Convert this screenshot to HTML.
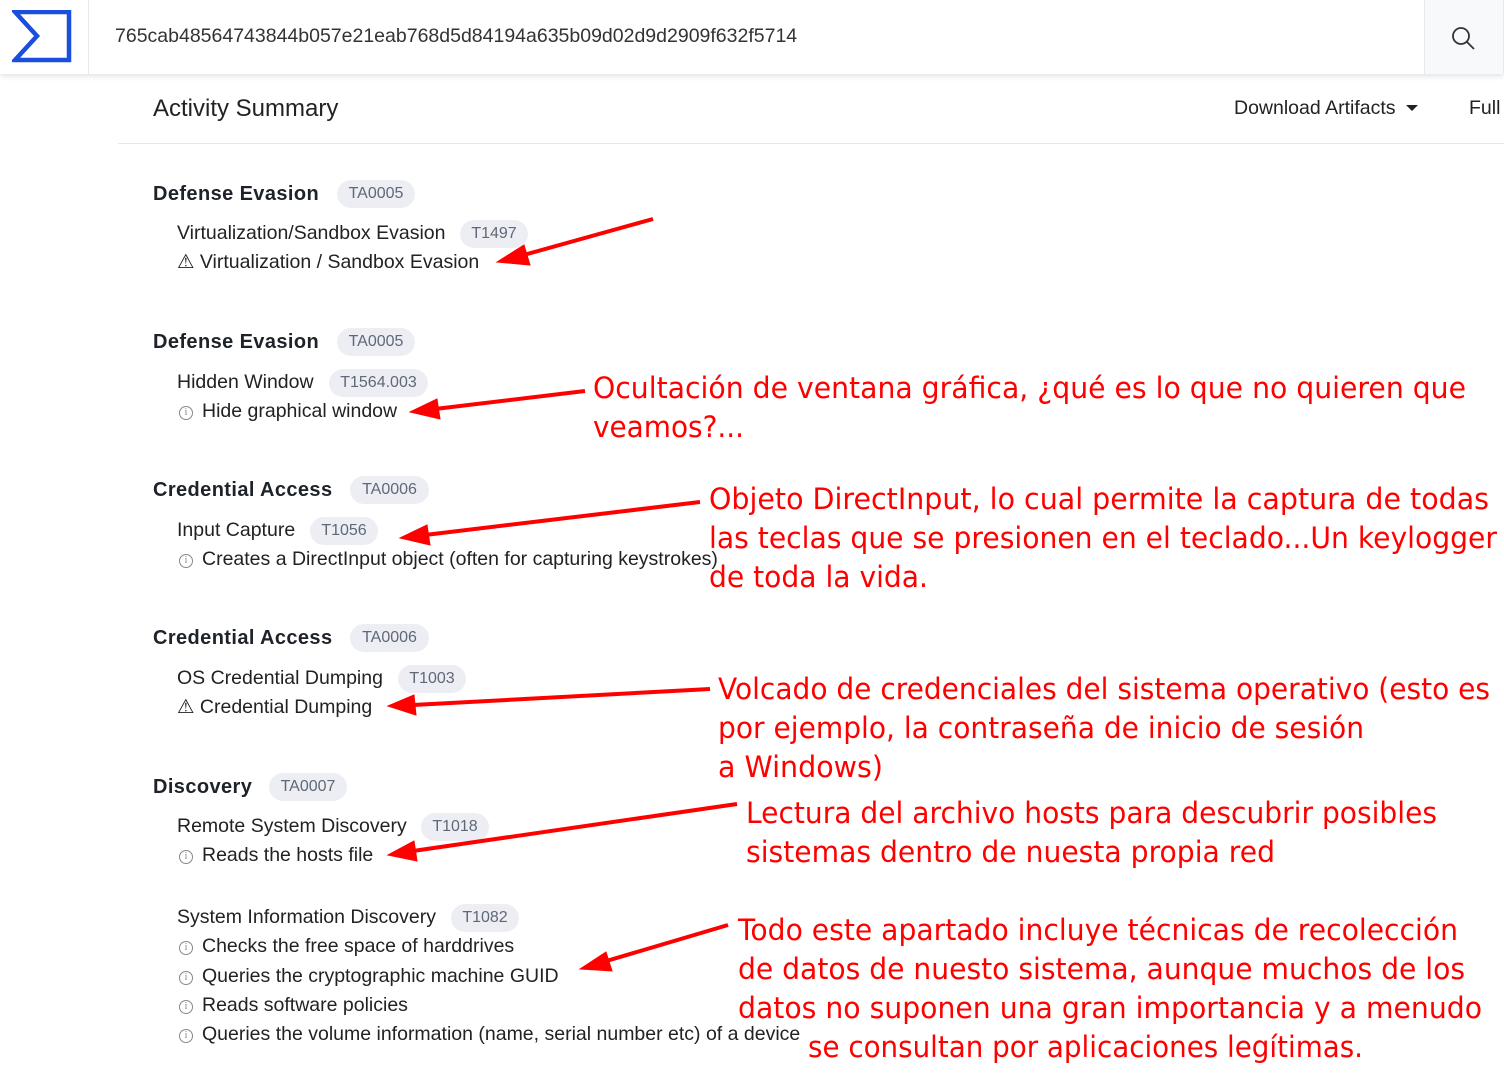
<!DOCTYPE html>
<html><head><meta charset="utf-8"><style>
body{margin:0;width:1504px;height:1079px;background:#fff;position:relative;overflow:hidden;font-family:"Liberation Sans",Arial,sans-serif;color:#222;}
.a{position:absolute;white-space:nowrap;line-height:1;}
.h{font-weight:bold;font-size:20px;letter-spacing:0.4px;color:#1e2229;}
.t{font-size:19.5px;color:#222;}
.s{font-size:19.5px;color:#222;}
.b{position:absolute;height:28px;border-radius:14px;background:#eceef3;color:#606877;font-size:16px;line-height:28px;text-align:center;}
.i{display:inline-block;width:12px;height:12px;border:1px solid #888;border-radius:50%;font-size:10px;line-height:12px;text-align:center;color:#888;margin-right:9px;vertical-align:2px;font-family:"Liberation Serif",serif;}
</style></head><body>
<div style="position:absolute;left:0;top:0;width:1504px;height:74px;background:#fff;box-shadow:0 2px 6px rgba(0,0,0,.12);"></div>
<svg class="a" style="left:12px;top:10px" width="60" height="53"><path d="M3 2 H57 V50 H3 L25 26 Z" fill="none" stroke="#1a4fdd" stroke-width="4.5"/></svg>
<div style="position:absolute;left:88px;top:0;width:1px;height:74px;background:#e6e8ee"></div>
<div class="a" style="left:115px;top:27px;font-size:19.5px;color:#333">765cab48564743844b057e21eab768d5d84194a635b09d02d9d2909f632f5714</div>
<div style="position:absolute;left:1424px;top:0;width:78px;height:74px;background:#f8f9fa;border-left:1px solid #e6e8ee;border-right:1px solid #e6e8ee"></div>
<svg class="a" style="left:1450px;top:25px" width="26" height="26"><circle cx="11" cy="11" r="8" fill="none" stroke="#333" stroke-width="1.8"/><path d="M17 17 L24 24" stroke="#333" stroke-width="1.8"/></svg>
<div class="a" style="left:153px;top:97px;font-size:24px;color:#222">Activity Summary</div>
<div class="a" style="left:1234px;top:99px;font-size:19.5px;color:#222">Download Artifacts</div>
<svg class="a" style="left:1406px;top:105px" width="12" height="8"><path d="M0 0H12L6 6Z" fill="#222"/></svg>
<div class="a" style="left:1469px;top:99px;font-size:19.5px;color:#222">Full</div>
<div style="position:absolute;left:118px;top:143px;width:1386px;height:1px;background:#e5e7eb"></div>

<div class="a h" style="left:153px;top:184px">Defense Evasion</div><div class="b" style="left:337px;top:180px;width:78px">TA0005</div>
<div class="a t" style="left:177px;top:224px">Virtualization/Sandbox Evasion</div><div class="b" style="left:460px;top:220px;width:68px">T1497</div>
<div class="a s" style="left:177px;top:253px">⚠ Virtualization / Sandbox Evasion</div>

<div class="a h" style="left:153px;top:332px">Defense Evasion</div><div class="b" style="left:337px;top:328px;width:78px">TA0005</div>
<div class="a t" style="left:177px;top:373px">Hidden Window</div><div class="b" style="left:329px;top:369px;width:99px">T1564.003</div>
<div class="a s" style="left:179px;top:402px"><span class="i">i</span>Hide graphical window</div>

<div class="a h" style="left:153px;top:480px">Credential Access</div><div class="b" style="left:350px;top:476px;width:79px">TA0006</div>
<div class="a t" style="left:177px;top:521px">Input Capture</div><div class="b" style="left:310px;top:517px;width:68px">T1056</div>
<div class="a s" style="left:179px;top:550px"><span class="i">i</span>Creates a DirectInput object (often for capturing keystrokes)</div>

<div class="a h" style="left:153px;top:628px">Credential Access</div><div class="b" style="left:350px;top:624px;width:79px">TA0006</div>
<div class="a t" style="left:177px;top:669px">OS Credential Dumping</div><div class="b" style="left:398px;top:665px;width:68px">T1003</div>
<div class="a s" style="left:177px;top:698px">⚠ Credential Dumping</div>

<div class="a h" style="left:153px;top:777px">Discovery</div><div class="b" style="left:269px;top:773px;width:78px">TA0007</div>
<div class="a t" style="left:177px;top:817px">Remote System Discovery</div><div class="b" style="left:421px;top:813px;width:68px">T1018</div>
<div class="a s" style="left:179px;top:846px"><span class="i">i</span>Reads the hosts file</div>

<div class="a t" style="left:177px;top:908px">System Information Discovery</div><div class="b" style="left:451px;top:904px;width:68px">T1082</div>
<div class="a s" style="left:179px;top:937px"><span class="i">i</span>Checks the free space of harddrives</div>
<div class="a s" style="left:179px;top:967px"><span class="i">i</span>Queries the cryptographic machine GUID</div>
<div class="a s" style="left:179px;top:996px"><span class="i">i</span>Reads software policies</div>
<div class="a s" style="left:179px;top:1025px"><span class="i">i</span>Queries the volume information (name, serial number etc) of a device</div>

<svg class="a" style="left:0;top:0" width="1504" height="1079" font-family="DejaVu Sans, Verdana, sans-serif" font-size="29" fill="#ff0000">
<g stroke="#f00" stroke-width="4" fill="#f00">
<line x1="653" y1="219" x2="520" y2="256"/><path d="M497 262 L524 245 L530 265 Z" stroke-width="1"/>
<line x1="585" y1="391" x2="435" y2="409"/><path d="M410 412 L437 399 L440 419 Z" stroke-width="1"/>
<line x1="700" y1="502" x2="425" y2="535"/><path d="M400 538 L427 525 L430 545 Z" stroke-width="1"/>
<line x1="710" y1="689" x2="413" y2="705"/><path d="M388 706 L414 695 L416 715 Z" stroke-width="1"/>
<line x1="737" y1="804" x2="413" y2="851"/><path d="M388 855 L414 841 L417 861 Z" stroke-width="1"/>
<line x1="728" y1="925" x2="603" y2="962"/><path d="M580 969 L606 952 L612 971 Z" stroke-width="1"/>
</g>
<text x="593" y="398" textLength="873" lengthAdjust="spacingAndGlyphs">Ocultación de ventana gráfica, ¿qué es lo que no quieren que</text>
<text x="593" y="437" textLength="151" lengthAdjust="spacingAndGlyphs">veamos?...</text>
<text x="709" y="509" textLength="780" lengthAdjust="spacingAndGlyphs">Objeto DirectInput, lo cual permite la captura de todas</text>
<text x="709" y="548" textLength="788" lengthAdjust="spacingAndGlyphs">las teclas que se presionen en el teclado...Un keylogger</text>
<text x="709" y="587" textLength="219" lengthAdjust="spacingAndGlyphs">de toda la vida.</text>
<text x="718" y="699" textLength="772" lengthAdjust="spacingAndGlyphs">Volcado de credenciales del sistema operativo (esto es</text>
<text x="718" y="738" textLength="646" lengthAdjust="spacingAndGlyphs">por ejemplo, la contraseña de inicio de sesión</text>
<text x="718" y="777" textLength="165" lengthAdjust="spacingAndGlyphs">a Windows)</text>
<text x="746" y="823" textLength="691" lengthAdjust="spacingAndGlyphs">Lectura del archivo hosts para descubrir posibles</text>
<text x="746" y="862" textLength="529" lengthAdjust="spacingAndGlyphs">sistemas dentro de nuesta propia red</text>
<text x="738" y="940" textLength="720" lengthAdjust="spacingAndGlyphs">Todo este apartado incluye técnicas de recolección</text>
<text x="738" y="979" textLength="727" lengthAdjust="spacingAndGlyphs">de datos de nuesto sistema, aunque muchos de los</text>
<text x="738" y="1018" textLength="744" lengthAdjust="spacingAndGlyphs">datos no suponen una gran importancia y a menudo</text>
<text x="808" y="1057" textLength="555" lengthAdjust="spacingAndGlyphs">se consultan por aplicaciones legítimas.</text>
</svg>
</body></html>
